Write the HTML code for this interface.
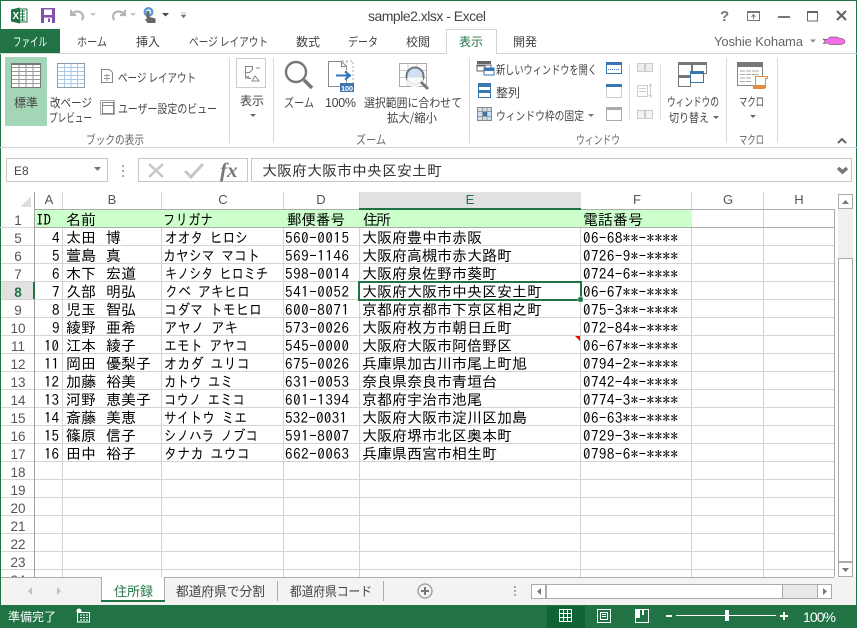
<!DOCTYPE html>
<html lang="ja"><head><meta charset="utf-8"><title>sample2.xlsx - Excel</title>
<style>
html,body{margin:0;padding:0;background:#fff;overflow:hidden}
svg{display:block;position:absolute;left:0;top:0}
text{font-family:"Noto Sans CJK JP","Liberation Sans",sans-serif;font-size:12px;fill:#444;white-space:pre}
.l{font-family:"Liberation Sans",sans-serif}
.c text{font-family:"IPAGothic","Liberation Sans",sans-serif;font-size:15px;fill:#000}
.h text{font-family:"Liberation Sans",sans-serif;font-size:13px;fill:#555;text-anchor:middle}
.r text{font-family:"Liberation Sans",sans-serif;font-size:13.5px;fill:#555;text-anchor:middle}
.g line{stroke:#d4d4d4;stroke-width:1}
</style></head><body>
<svg width="857" height="628" viewBox="0 0 857 628" xmlns="http://www.w3.org/2000/svg" shape-rendering="geometricPrecision">
<rect width="857" height="628" fill="#fff"/>
<!-- window border -->
<rect x="0" y="0" width="857" height="1" fill="#217346"/>
<rect x="0" y="0" width="1" height="628" fill="#217346"/>
<rect x="856" y="0" width="1" height="628" fill="#217346"/>

<!-- quick access -->
<rect x="17" y="9" width="10" height="13" fill="#fff" stroke="#217346"/>
<path d="M20 11h5M20 14h5M20 17h5M20 20h5M22.5 10v11" stroke="#217346" fill="none"/>
<path d="M11 9.5l9-2v16l-9-2z" fill="#217346"/>
<text class="l" x="12.500" y="19" style="font-size:10px;font-weight:bold;fill:#fff">X</text>
<path d="M41 8h14v15H41z" fill="#8250ad"/><rect x="44" y="9.500" width="8" height="5.500" fill="#fff"/><rect x="44" y="17.500" width="8" height="5.500" fill="#fff"/><rect x="48" y="18.500" width="2" height="3.500" fill="#8250ad"/>
<path d="M71 10v5h5M71.500 14.500c3-4 9-4 11 0 1 2 .5 4-1 5.500" fill="none" stroke="#b5b5b5" stroke-width="2.200"/>
<path d="M90 14l3 3 3-3z" fill="#c4c4c4" transform="translate(0 -1)"/>
<path d="M125 10v5h-5M124.500 14.500c-3-4-9-4-11 0-1 2-.5 4 1 5.500" fill="none" stroke="#b5b5b5" stroke-width="2.200"/>
<path d="M130 14l3 3 3-3z" fill="#c4c4c4" transform="translate(0 -1)"/>
<circle cx="148.500" cy="12" r="5" fill="#5d9ad8"/><circle cx="148.500" cy="12" r="2.500" fill="#fff"/>
<path d="M146.500 11h3v6l6 1.500V23h-8l-3-4 2 .5z" fill="#666"/>
<path d="M162 13h7l-3.500 3.500z" fill="#444"/>
<path d="M181 13h5M181 15h5l-2.500 3z" fill="#777" stroke="#777" stroke-width=".5"/>

<text class="l" x="368" y="21" textLength="118" style="font-size:14px;fill:#444">sample2.xlsx - Excel</text>
<!-- window buttons -->
<text class="l" x="720" y="21" style="font-size:15px;font-weight:bold;fill:#777">?</text>
<rect x="747.500" y="11.500" width="12" height="9" fill="none" stroke="#777"/><rect x="747" y="11" width="13" height="2" fill="#777"/><path d="M753.500 19v-4M751.500 17l2-2.500 2 2.500" fill="none" stroke="#777"/>
<rect x="778" y="16" width="12" height="2" fill="#777"/>
<rect x="807.500" y="11.500" width="10" height="9.500" fill="none" stroke="#666"/><rect x="807" y="11" width="11" height="2" fill="#666"/>
<path d="M837 11l9 9M846 11l-9 9" stroke="#666" stroke-width="2.200"/>

<!-- tab row -->
<rect x="0" y="29" width="60" height="25" fill="#217346"/>
<rect x="0" y="53" width="857" height="1" fill="#d4d4d4"/>
<path d="M446.500 54V29.500H496.500V54" fill="#fff" stroke="#d4d4d4"/>
<text x="13" y="46" textLength="34" lengthAdjust="spacingAndGlyphs" style="fill:#fff">ファイル</text>
<text x="77" y="46" textLength="30" lengthAdjust="spacingAndGlyphs">ホーム</text>
<text x="136" y="46" textLength="24">挿入</text>
<text x="189" y="46" textLength="79" lengthAdjust="spacingAndGlyphs">ページ レイアウト</text>
<text x="296" y="46" textLength="24">数式</text>
<text x="348" y="46" textLength="30" lengthAdjust="spacingAndGlyphs">データ</text>
<text x="406" y="46" textLength="24">校閲</text>
<text x="459" y="46" textLength="24" style="fill:#217346">表示</text>
<text x="513" y="46" textLength="24">開発</text>
<text class="l" x="714" y="46" textLength="89" style="font-size:13px;fill:#666">Yoshie Kohama</text>
<path d="M810 39.500h6l-3 3z" fill="#888"/>
<path d="M823 39l4 .5 3-2.500h7l3 1.500c3 0 5 1 5 3s-2 3-5 3h-10l-3-1.500-4 .5 2-2z" fill="#f56ee8" stroke="#333" stroke-width=".5"/>

<!-- ribbon -->
<rect x="0" y="147" width="857" height="1" fill="#d4d4d4"/>
<rect x="5" y="57" width="42" height="69" fill="#a2d6b6"/>
<g fill="#d9d9d9"><rect x="229" y="58" width="1" height="85"/><rect x="273" y="58" width="1" height="85"/><rect x="469" y="58" width="1" height="85"/><rect x="726" y="58" width="1" height="85"/><rect x="777" y="58" width="1" height="85"/></g>

<!-- normal view icon -->
<rect x="11.500" y="63.500" width="29" height="24" fill="#fff" stroke="#777"/>
<path d="M11.500 67.500h29M11.500 71.500h29M11.500 75.500h29M11.500 79.500h29M11.500 83.500h29M19 64v23M26 64v23M33 64v23" stroke="#999" fill="none"/>
<rect x="11" y="63" width="30" height="2" fill="#777"/>
<!-- page break icon -->
<rect x="57.500" y="63.500" width="27" height="24" fill="#fff" stroke="#8a9aa8"/>
<path d="M57.500 67.500h27M57.500 71.500h27M57.500 75.500h27M57.500 79.500h27M57.500 83.500h27M64.500 64v23M71 64v23M77.500 64v23" stroke="#a9c7e6" fill="none"/>
<text x="14" y="107" textLength="24">標準</text>
<text x="50" y="107" textLength="42" lengthAdjust="spacingAndGlyphs">改ページ</text>
<text x="49" y="122" textLength="43" lengthAdjust="spacingAndGlyphs">プレビュー</text>
<!-- page layout icon -->
<path d="M101.500 69.500h8l3 3v10h-11z" fill="#fff" stroke="#888"/><path d="M104 75.500h6M104 78.500h6M107 74v7" stroke="#999" fill="none"/>
<text x="118" y="82" textLength="78" lengthAdjust="spacingAndGlyphs">ページ レイアウト</text>
<!-- custom view -->
<rect x="102.500" y="102.500" width="11" height="11" fill="#fff" stroke="#888"/><rect x="100.500" y="100.500" width="14" height="14" fill="none" stroke="#aaa"/><path d="M103 105.500h10" stroke="#888"/>
<text x="118" y="113" textLength="99" lengthAdjust="spacingAndGlyphs">ユーザー設定のビュー</text>
<text x="86" y="144" textLength="58" lengthAdjust="spacingAndGlyphs" style="fill:#666">ブックの表示</text>

<!-- show icon -->
<rect x="236.500" y="58.500" width="29" height="29" fill="#fff" stroke="#ccc"/>
<path d="M245.500 66.500h7v3l-3 3h-4zM256 68h4M245 78.500l3-2v2h3M252 81l3-5 4 5z" fill="none" stroke="#888"/>
<path d="M245.500 66.500v10.500h4" fill="none" stroke="#888"/>
<text x="240" y="105" textLength="24">表示</text>
<path d="M250 114h6l-3 3z" fill="#666"/>

<!-- zoom group -->
<circle cx="296" cy="72" r="10" fill="#fff" stroke="#777" stroke-width="2.400"/><path d="M304 80l8 8" stroke="#777" stroke-width="3.500"/>
<path d="M328.500 61.500h13l5 5v20h-18z" fill="#fff" stroke="#888"/><path d="M341.500 61.500v5h5" fill="none" stroke="#888"/><path d="M346.500 61v28M342 61h11v28" fill="none" stroke="#aaa" stroke-dasharray="2 2"/>
<path d="M336 75.500h13M345 71.500l5 4-5 4" fill="none" stroke="#2f78bb" stroke-width="2"/>
<rect x="340" y="83" width="14" height="9" fill="#3d76ae"/>
<text class="l" x="341" y="91" textLength="12" style="font-size:7.500px;font-weight:bold;fill:#fff">100</text>
<text x="284" y="107" textLength="30" lengthAdjust="spacingAndGlyphs">ズーム</text>
<text class="l" x="325" y="107" textLength="31" style="font-size:12.500px">100%</text>
<rect x="399.500" y="63.500" width="27" height="23" fill="#fff" stroke="#aaa"/>
<path d="M400 70.500h26M400 77.500h26M408 64v22M417 64v22" stroke="#ccc" fill="none"/>
<circle cx="415" cy="76" r="8.500" fill="#cfe0f0" stroke="#777" stroke-width="2"/><path d="M407 77.500h16v2a8 8 0 0 1-16 0z" fill="#fff" opacity=".85"/><path d="M421 82l7 7" stroke="#777" stroke-width="3"/>
<text x="364" y="107" textLength="98" lengthAdjust="spacingAndGlyphs">選択範囲に合わせて</text>
<text x="387" y="122" textLength="50" lengthAdjust="spacingAndGlyphs">拡大/縮小</text>
<text x="356" y="144" textLength="30" lengthAdjust="spacingAndGlyphs" style="fill:#666">ズーム</text>

<!-- window group -->
<rect x="477" y="65" width="14" height="6" fill="#fff" stroke="#666"/><rect x="477" y="61" width="14" height="3" fill="#666"/><rect x="477" y="66" width="8" height="5" fill="#fff" stroke="#666"/>
<rect x="484" y="68" width="10" height="7" fill="#fff" stroke="#3a76b0"/><rect x="484" y="68" width="10" height="3" fill="#3a76b0"/>
<text x="496" y="74" textLength="101" lengthAdjust="spacingAndGlyphs">新しいウィンドウを開く</text>
<rect x="478.500" y="83.500" width="12" height="14" fill="#fff" stroke="#3a76b0"/><rect x="478" y="83" width="13" height="4" fill="#3a76b0"/><rect x="478" y="90" width="13" height="3" fill="#3a76b0"/>
<text x="496" y="97" textLength="24">整列</text>
<rect x="477.500" y="107.500" width="14" height="13" fill="#cfe0f0" stroke="#888"/><path d="M478 111.500h13M478 116.500h13M482.500 108v12M487 108v12" stroke="#999" fill="none"/><rect x="483" y="112" width="4" height="4" fill="#3a76b0"/>
<text x="496" y="120" textLength="88" lengthAdjust="spacingAndGlyphs">ウィンドウ枠の固定</text>
<path d="M588 114h6l-3 3z" fill="#777"/>
<rect x="606.500" y="62.500" width="15" height="11" fill="#fff" stroke="#3a76b0"/><rect x="606" y="62" width="16" height="3" fill="#3a76b0"/><path d="M608 69.500h12" stroke="#3a76b0" stroke-dasharray="1 1"/>
<rect x="606.500" y="85.500" width="15" height="12" fill="#fff" stroke="#999" stroke-dasharray="1 1"/><rect x="606" y="84" width="16" height="3" fill="#3a76b0"/>
<rect x="606.500" y="107.500" width="15" height="13" fill="#fff" stroke="#aaa"/><rect x="606" y="107" width="16" height="3" fill="#aaa"/>
<rect x="629" y="64" width="1" height="55" fill="#e0e0e0"/>
<g fill="#fff" stroke="#ccc"><path d="M637.500 63.500h7v8h-7zM645.500 63.500h7v8h-7z" fill="#eee"/><path d="M637.500 85.500h10v11h-10zM639 88.500h7M639 91.500h7"/><path d="M650.500 84v13M649 86l1.500-2 1.500 2M649 95l1.500 2 1.500-2"/><path d="M637.500 110.500h7v8h-7zM645.500 110.500h7v8h-7z" fill="#f3f3f3"/></g>
<rect x="660" y="64" width="1" height="55" fill="#e0e0e0"/>
<rect x="678.500" y="62.500" width="13" height="15" fill="#fff" stroke="#777"/><rect x="678" y="62" width="14" height="3" fill="#777"/>
<rect x="692.500" y="62.500" width="14" height="11" fill="#fff" stroke="#777"/><rect x="692" y="62" width="15" height="3" fill="#777"/>
<rect x="678.500" y="75.500" width="12" height="11" fill="#fff" stroke="#777"/><rect x="678" y="75" width="13" height="3" fill="#777"/>
<rect x="690.500" y="71.500" width="13" height="11" fill="#fff" stroke="#3a76b0"/><rect x="690" y="71" width="14" height="3" fill="#3a76b0"/>
<text x="667" y="106" textLength="52" lengthAdjust="spacingAndGlyphs">ウィンドウの</text>
<text x="669" y="122" textLength="40" lengthAdjust="spacingAndGlyphs">切り替え</text>
<path d="M713 116h6l-3 3z" fill="#666"/>
<text x="576" y="144" textLength="44" lengthAdjust="spacingAndGlyphs" style="fill:#666">ウィンドウ</text>

<!-- macro -->
<rect x="737.500" y="63.500" width="25" height="22" fill="#fff" stroke="#888"/><rect x="737" y="62" width="26" height="5" fill="#777"/>
<path d="M740 71h5M746 71h5M752 71h7M740 74.500h5M746 74.500h5M752 74.500h7M740 78h5M746 78h5M740 81.500h5M746 81.500h5" stroke="#aaa" fill="none"/>
<path d="M755.500 76.500h12v2h-2v9h-10c-1 0-2-.5-2-2h2z" fill="#fff" stroke="#e58b3e"/><rect x="753" y="85" width="12" height="4" fill="#e58b3e"/>
<text x="739" y="106" textLength="25" lengthAdjust="spacingAndGlyphs">マクロ</text>
<path d="M750 115h6l-3 3z" fill="#666"/>
<text x="739" y="144" textLength="25" lengthAdjust="spacingAndGlyphs" style="fill:#666">マクロ</text>
<path d="M838 143l4-4 4 4" fill="none" stroke="#666" stroke-width="2"/>

<!-- formula bar -->
<rect x="6.500" y="158.500" width="101" height="23" fill="#fff" stroke="#c6c6c6"/>
<text class="l" x="14" y="175" style="font-size:12px;fill:#444">E8</text>
<path d="M94 167h7l-3.500 4z" fill="#777"/>
<path d="M123 165v2M123 170v2M123 175v2" stroke="#aaa" stroke-width="2"/>
<rect x="138.500" y="158.500" width="109" height="23" fill="#fff" stroke="#c6c6c6"/>
<path d="M149 164l14 13M163 164l-14 13" stroke="#c6c6c6" stroke-width="2.500"/>
<path d="M185 171l6 6 12-13" fill="none" stroke="#c6c6c6" stroke-width="3"/>
<text x="220" y="177" style="font-family:'Liberation Serif',serif;font-style:italic;font-weight:bold;font-size:21px;fill:#777">fx</text>
<rect x="251.500" y="158.500" width="600" height="23" fill="#fff" stroke="#c6c6c6"/>
<text x="262" y="176" style="font-family:'IPAGothic',sans-serif;font-size:15px;fill:#333">大阪府大阪市中央区安土町</text>
<path d="M838 168l4.500 4 4.500-4" fill="none" stroke="#777" stroke-width="3.500"/>

<!-- grid -->
<g class="g">
<line x1="35" x2="834" y1="245.500" y2="245.500"/><line x1="35" x2="834" y1="263.500" y2="263.500"/><line x1="35" x2="834" y1="281.500" y2="281.500"/><line x1="35" x2="834" y1="299.500" y2="299.500"/><line x1="35" x2="834" y1="317.500" y2="317.500"/><line x1="35" x2="834" y1="335.500" y2="335.500"/><line x1="35" x2="834" y1="353.500" y2="353.500"/><line x1="35" x2="834" y1="371.500" y2="371.500"/><line x1="35" x2="834" y1="389.500" y2="389.500"/><line x1="35" x2="834" y1="407.500" y2="407.500"/><line x1="35" x2="834" y1="425.500" y2="425.500"/><line x1="35" x2="834" y1="443.500" y2="443.500"/><line x1="35" x2="834" y1="461.500" y2="461.500"/><line x1="35" x2="834" y1="479.500" y2="479.500"/><line x1="35" x2="834" y1="497.500" y2="497.500"/><line x1="35" x2="834" y1="515.500" y2="515.500"/><line x1="35" x2="834" y1="533.500" y2="533.500"/><line x1="35" x2="834" y1="551.500" y2="551.500"/><line x1="35" x2="834" y1="569.500" y2="569.500"/>
<line x1="62.500" x2="62.500" y1="192" y2="577"/><line x1="161.500" x2="161.500" y1="192" y2="577"/><line x1="283.500" x2="283.500" y1="192" y2="577"/><line x1="359.500" x2="359.500" y1="192" y2="577"/><line x1="580.500" x2="580.500" y1="192" y2="577"/><line x1="691.500" x2="691.500" y1="192" y2="577"/><line x1="763.500" x2="763.500" y1="192" y2="577"/>
</g>
<rect x="35" y="210" width="657" height="17" fill="#ccffcc"/>
<rect x="360" y="192" width="221" height="17" fill="#e1e1e1"/>
<rect x="35" y="209" width="799" height="1" fill="#ababab"/><rect x="359" y="208" width="222" height="2" fill="#217346"/>
<rect x="35" y="227" width="799" height="1" fill="#ababab"/>
<rect x="0" y="227" width="35" height="1" fill="#d4d4d4"/>
<rect x="34" y="192" width="1" height="385" fill="#a0a0a0"/>
<rect x="834" y="209" width="1" height="368" fill="#ababab"/>
<path d="M31 196v11H20z" fill="#dedede"/>
<g fill="#d4d4d4"><rect x="1" y="245" width="33" height="1"/><rect x="1" y="263" width="33" height="1"/><rect x="1" y="281" width="33" height="1"/><rect x="1" y="299" width="33" height="1"/><rect x="1" y="317" width="33" height="1"/><rect x="1" y="335" width="33" height="1"/><rect x="1" y="353" width="33" height="1"/><rect x="1" y="371" width="33" height="1"/><rect x="1" y="389" width="33" height="1"/><rect x="1" y="407" width="33" height="1"/><rect x="1" y="425" width="33" height="1"/><rect x="1" y="443" width="33" height="1"/><rect x="1" y="461" width="33" height="1"/><rect x="1" y="479" width="33" height="1"/><rect x="1" y="497" width="33" height="1"/><rect x="1" y="515" width="33" height="1"/><rect x="1" y="533" width="33" height="1"/><rect x="1" y="551" width="33" height="1"/><rect x="1" y="569" width="33" height="1"/></g>
<rect x="1" y="282" width="33" height="17" fill="#e1e1e1"/><rect x="33" y="282" width="2" height="17" fill="#217346"/>

<!-- column headers -->
<g class="h">
<text x="49" y="204">A</text><text x="112" y="204">B</text><text x="223" y="204">C</text><text x="321" y="204">D</text><text x="470" y="204" style="fill:#217346">E</text><text x="637" y="204">F</text><text x="728" y="204">G</text><text x="799" y="204">H</text>
</g>
<!-- row headers -->
<g class="r">
<text x="18" y="225">1</text><text x="18" y="243">5</text><text x="18" y="261">6</text><text x="18" y="279">7</text><text x="18" y="297" style="fill:#217346;font-weight:bold">8</text><text x="18" y="315">9</text><text x="18" y="333">10</text><text x="18" y="351">11</text><text x="18" y="369">12</text><text x="18" y="387">13</text><text x="18" y="405">14</text><text x="18" y="423">15</text><text x="18" y="441">16</text><text x="18" y="459">17</text><text x="18" y="477">18</text><text x="18" y="495">19</text><text x="18" y="513">20</text><text x="18" y="531">21</text><text x="18" y="549">22</text><text x="18" y="567">23</text><text x="18" y="585">24</text>
</g>

<!-- cells -->
<g class="c">
<text x="36" y="225" textLength="15">ID</text><text x="66" y="225">名前</text><text x="163" y="225" textLength="50" lengthAdjust="spacingAndGlyphs">フリガナ</text><text x="287" y="225" textLength="58" lengthAdjust="spacingAndGlyphs">郵便番号</text><text x="363" y="225" textLength="28">住所</text><text x="583" y="225">電話番号</text>

<text x="52" y="243">4</text><text x="66 81 96 106" y="243">太田　博</text><text x="165" y="243" textLength="83" lengthAdjust="spacingAndGlyphs">オオタ ヒロシ</text><text x="285" y="243" textLength="64">560-0015</text><text x="362" y="243">大阪府豊中市赤阪</text><text x="583" y="243" textLength="95">06-68**-****</text>

<text x="52" y="261">5</text><text x="66 81 96 106" y="261">萱島　真</text><text x="163" y="261" textLength="97" lengthAdjust="spacingAndGlyphs">カヤシマ マコト</text><text x="285" y="261" textLength="64">569-1146</text><text x="362" y="261">大阪府高槻市赤大路町</text><text x="583" y="261" textLength="95">0726-9*-****</text>

<text x="52" y="279">6</text><text x="66 81 96 106 121" y="279">木下　宏道</text><text x="165" y="279" textLength="103" lengthAdjust="spacingAndGlyphs">キノシタ ヒロミチ</text><text x="285" y="279" textLength="64">598-0014</text><text x="362" y="279">大阪府泉佐野市葵町</text><text x="583" y="279" textLength="95">0724-6*-****</text>

<text x="52" y="297">7</text><text x="66 81 96 106 121" y="297">久部　明弘</text><text x="165" y="297" textLength="85" lengthAdjust="spacingAndGlyphs">クベ アキヒロ</text><text x="285" y="297" textLength="64">541-0052</text><text x="362" y="297">大阪府大阪市中央区安土町</text><text x="583" y="297" textLength="95">06-67**-****</text>

<text x="52" y="315">8</text><text x="66 81 96 106 121" y="315">児玉　智弘</text><text x="164" y="315" textLength="98" lengthAdjust="spacingAndGlyphs">コダマ トモヒロ</text><text x="285" y="315" textLength="64">600-8071</text><text x="362" y="315">京都府京都市下京区相之町</text><text x="583" y="315" textLength="95">075-3**-****</text>

<text x="52" y="333">9</text><text x="66 81 96 106 121" y="333">綾野　亜希</text><text x="164" y="333" textLength="74" lengthAdjust="spacingAndGlyphs">アヤノ アキ</text><text x="285" y="333" textLength="64">573-0026</text><text x="362" y="333">大阪府枚方市朝日丘町</text><text x="583" y="333" textLength="95">072-84*-****</text>

<text x="44" y="351" textLength="15">10</text><text x="66 81 96 106 121" y="351">江本　綾子</text><text x="164" y="351" textLength="84" lengthAdjust="spacingAndGlyphs">エモト アヤコ</text><text x="285" y="351" textLength="64">545-0000</text><text x="362" y="351">大阪府大阪市阿倍野区</text><text x="583" y="351" textLength="95">06-67**-****</text>

<text x="44" y="369" textLength="15">11</text><text x="66 81 96 106 121 136" y="369">岡田　優梨子</text><text x="164" y="369" textLength="86" lengthAdjust="spacingAndGlyphs">オカダ ユリコ</text><text x="285" y="369" textLength="64">675-0026</text><text x="362" y="369">兵庫県加古川市尾上町旭</text><text x="583" y="369" textLength="95">0794-2*-****</text>

<text x="44" y="387" textLength="15">12</text><text x="66 81 96 106 121" y="387">加藤　裕美</text><text x="164" y="387" textLength="69" lengthAdjust="spacingAndGlyphs">カトウ ユミ</text><text x="285" y="387" textLength="64">631-0053</text><text x="362" y="387">奈良県奈良市青垣台</text><text x="583" y="387" textLength="95">0742-4*-****</text>

<text x="44" y="405" textLength="15">13</text><text x="66 81 96 106 121 136" y="405">河野　恵美子</text><text x="164" y="405" textLength="81" lengthAdjust="spacingAndGlyphs">コウノ エミコ</text><text x="285" y="405" textLength="64">601-1394</text><text x="362" y="405">京都府宇治市池尾</text><text x="583" y="405" textLength="95">0774-3*-****</text>

<text x="44" y="423" textLength="15">14</text><text x="66 81 96 106 121" y="423">斎藤　美恵</text><text x="164" y="423" textLength="83" lengthAdjust="spacingAndGlyphs">サイトウ ミエ</text><text x="285" y="423" textLength="62">532-0031</text><text x="362" y="423">大阪府大阪市淀川区加島</text><text x="583" y="423" textLength="95">06-63**-****</text>

<text x="44" y="441" textLength="15">15</text><text x="66 81 96 106 121" y="441">篠原　信子</text><text x="164" y="441" textLength="94" lengthAdjust="spacingAndGlyphs">シノハラ ノブコ</text><text x="285" y="441" textLength="64">591-8007</text><text x="362" y="441">大阪府堺市北区奥本町</text><text x="583" y="441" textLength="95">0729-3*-****</text>

<text x="44" y="459" textLength="15">16</text><text x="66 81 96 106 121" y="459">田中　裕子</text><text x="164" y="459" textLength="86" lengthAdjust="spacingAndGlyphs">タナカ ユウコ</text><text x="285" y="459" textLength="64">662-0063</text><text x="362" y="459">兵庫県西宮市相生町</text><text x="583" y="459" textLength="95">0798-6*-****</text>
</g>

<!-- selection -->
<rect x="359" y="282" width="222" height="18" fill="none" stroke="#217346" stroke-width="2"/>
<rect x="578" y="297" width="5" height="5" fill="#217346" stroke="#fff" stroke-width=".5"/>
<path d="M575 336h5v5z" fill="#f00"/>

<!-- vertical scrollbar -->
<rect x="835" y="192" width="21" height="385" fill="#fff"/>
<rect x="838" y="194" width="15" height="382" fill="#f0f0f0"/>
<rect x="838.500" y="194.500" width="14" height="14" fill="#fff" stroke="#ababab"/><path d="M842 204h7l-3.500-4z" fill="#777"/>
<rect x="838.500" y="258.500" width="14" height="303" fill="#fff" stroke="#ababab"/>
<rect x="838.500" y="562.500" width="14" height="14" fill="#fff" stroke="#ababab"/><path d="M842 568h7l-3.500 4z" fill="#777"/>

<!-- sheet tabs bar -->
<rect x="1" y="577" width="855" height="28" fill="#f3f3f3"/>
<rect x="1" y="577" width="833" height="1" fill="#ababab"/>
<path d="M32 587v8l-4-4z" fill="#c0c0c0"/><path d="M57 587v8l4-4z" fill="#c0c0c0"/>
<rect x="101" y="578" width="64" height="24" fill="#fff"/>
<rect x="101" y="577" width="1" height="25" fill="#ababab"/><rect x="164" y="577" width="1" height="25" fill="#ababab"/>
<rect x="102" y="577" width="62" height="1" fill="#fff"/>
<rect x="101" y="600" width="64" height="2" fill="#217346"/>
<text x="114" y="596" textLength="39" style="font-size:13px;fill:#217346">住所録</text>
<text x="176" y="596" textLength="89" lengthAdjust="spacingAndGlyphs" style="font-size:13px">都道府県で分割</text>
<rect x="277" y="581" width="1" height="20" fill="#ababab"/>
<text x="290" y="596" textLength="82" lengthAdjust="spacingAndGlyphs" style="font-size:13px">都道府県コード</text>
<rect x="383" y="581" width="1" height="20" fill="#ababab"/>
<circle cx="425" cy="591" r="7" fill="none" stroke="#999" stroke-width="1.300"/><path d="M421 591h8M425 587v8" stroke="#777" stroke-width="2"/>
<path d="M515 586v2M515 590v2M515 594v2" stroke="#aaa" stroke-width="2"/>
<!-- horizontal scrollbar -->
<rect x="531.500" y="584.500" width="300" height="14" fill="#e9e9e9" stroke="#ababab"/>
<rect x="531.500" y="584.500" width="14" height="14" fill="#fff" stroke="#ababab"/><path d="M541 588v7l-4-3.500z" fill="#777"/>
<rect x="546.500" y="584.500" width="236" height="14" fill="#fff" stroke="#ababab"/>
<rect x="817.500" y="584.500" width="14" height="14" fill="#fff" stroke="#ababab"/><path d="M823 588v7l4-3.500z" fill="#777"/>

<!-- status bar -->
<rect x="0" y="605" width="857" height="23" fill="#217346"/>
<text x="8" y="621" textLength="48" style="font-size:12px;fill:#fff">準備完了</text>
<circle cx="79" cy="611" r="2.500" fill="#fff"/><rect x="77.500" y="612.500" width="12" height="9.500" fill="#217346" stroke="#fff"/><path d="M80 615h8M80 617.500h8M80 620h8" stroke="#fff" stroke-dasharray="2 1"/>
<rect x="547" y="606" width="38" height="22" fill="#0f6335"/>
<rect x="559.500" y="609.500" width="12" height="12" fill="none" stroke="#fff"/><path d="M563.500 610v11M567.500 610v11M560 613.500h11M560 617.500h11" stroke="#fff"/>
<rect x="597.500" y="609.500" width="13" height="13" fill="none" stroke="#fff"/><rect x="600.500" y="612.500" width="7" height="7" fill="none" stroke="#fff"/><path d="M602 614.500h4M602 616.500h4" stroke="#fff"/>
<rect x="635.500" y="609.500" width="13" height="13" fill="none" stroke="#fff"/><rect x="636" y="610" width="4" height="8" fill="#fff"/><rect x="642" y="610" width="2" height="5" fill="#fff"/>
<rect x="666" y="615" width="6" height="2" fill="#fff"/>
<rect x="676" y="615" width="100" height="1" fill="#fff"/>
<rect x="725" y="610" width="4" height="11" fill="#fff"/>
<path d="M780 616h8M784 612v8" stroke="#fff" stroke-width="2"/>
<text class="l" x="803" y="622" textLength="33" style="font-size:14px;fill:#fff">100%</text>
</svg>
</body></html>
